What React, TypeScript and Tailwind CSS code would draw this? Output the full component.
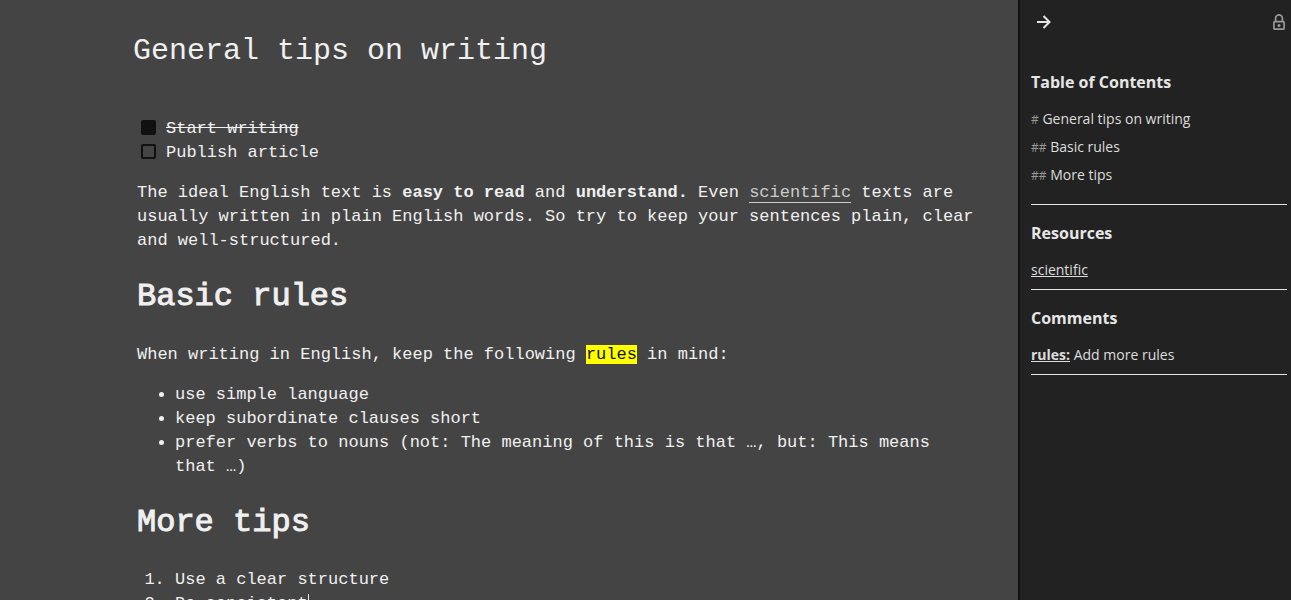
import type { ReactNode } from "react";

const tasks = [
  { id: "task-start", label: "Start writing", done: true },
  { id: "task-publish", label: "Publish article", done: false },
];

const toc = [
  { marker: "#", title: "General tips on writing", href: "#general" },
  { marker: "##", title: "Basic rules", href: "#basic-rules" },
  { marker: "##", title: "More tips", href: "#more-tips" },
];

function ArrowIcon() {
  return (
    <svg width="14" height="14" viewBox="0 0 14 14" fill="none" stroke="currentColor" strokeWidth="2" aria-hidden="true">
      <path d="M0 7h12.5M6.5 1l6 6-6 6" />
    </svg>
  );
}

function LockIcon() {
  return (
    <svg width="12" height="16" viewBox="0 0 12 16" fill="none" stroke="currentColor" strokeWidth="1.7" aria-hidden="true">
      <rect x="0.9" y="7.7" width="10.2" height="7.4" rx="0.8" />
      <path d="M2.6 7.7V4.2a3.4 3.4 0 0 1 6.8 0v3.5" />
      <circle cx="6" cy="11.4" r="1.5" fill="currentColor" stroke="none" />
    </svg>
  );
}

function Heading({ id, children }: { id: string; children: ReactNode }) {
  return (
    <h2 id={id} className="text-[32px] leading-[44px] font-normal [-webkit-text-stroke:1px_#f0f0f0]">
      {children}
    </h2>
  );
}

function PanelSection({ title, children }: { title: string; children: ReactNode }) {
  return (
    <section className="border-b border-[#e6e6e6] pt-4">
      <h3 className="text-[16px] leading-6 font-bold text-[#e6e6e6]">{title}</h3>
      {children}
    </section>
  );
}

export default function App() {
  return (
    <div className="flex h-screen overflow-hidden bg-[#444444]">
      <main className="min-w-0 flex-1 overflow-hidden pt-[29px] pr-10 pl-[133px] font-['Liberation_Mono',monospace] text-[17px] text-[#f0f0f0]">
        <h1 id="general" className="text-[30px] leading-[44px]">
          General tips on writing
        </h1>
        <article className="pt-11 pl-1">
          <ul className="leading-6">
            {tasks.map((task) => (
              <li key={task.id} className="flex items-start gap-2.5 pl-1">
                <input
                  id={task.id}
                  type="checkbox"
                  defaultChecked={task.done}
                  className="mt-[3px] size-[15px] appearance-none rounded-[2px] border-2 border-[#111111] checked:bg-[#111111]"
                />
                <label htmlFor={task.id} className={task.done ? "line-through" : ""}>
                  {task.label}
                </label>
              </li>
            ))}
          </ul>
          <p className="mt-4 leading-6">
            The ideal English text is <strong>easy to read</strong> and <strong>understand.</strong> Even{" "}
            <a href="#scientific" className="border-b border-[#cccccc] text-[#cccccc]">
              scientific
            </a>{" "}
            texts are usually written in plain English words. So try to keep your sentences plain, clear and
            well-structured.
          </p>
          <div className="mt-[22px]">
            <Heading id="basic-rules">Basic rules</Heading>
          </div>
          <p className="mt-6 leading-6">
            When writing in English, keep the following{" "}
            <mark className="bg-[#ffff00] text-[#111111]">rules</mark> in mind:
          </p>
          <ul className="mt-4 list-disc pl-[38px] leading-6">
            <li>use simple language</li>
            <li>keep subordinate clauses short</li>
            <li>prefer verbs to nouns (not: The meaning of this is that …, but: This means that …)</li>
          </ul>
          <div className="mt-[22px]">
            <Heading id="more-tips">More tips</Heading>
          </div>
          <ol className="mt-[23px] list-decimal pl-[38px] leading-6">
            <li>Use a clear structure</li>
            <li>
              <span className="border-r border-[#f0f0f0]">Be consistent</span>
            </li>
          </ol>
        </article>
      </main>

      <aside className="w-[273px] shrink-0 border-l-2 border-[#111111] bg-[#222222] pr-1 pl-[11px] font-['Open_Sans',sans-serif] text-[14px] text-[#dddddd]">
        <header className="flex h-[54px] justify-between pt-[14px] pr-0.5 pl-1.5">
          <button type="button" aria-label="Hide panel" className="h-4 text-[#e6e6e6]">
            <ArrowIcon />
          </button>
          <button type="button" aria-label="Lock" className="h-4 text-[#999999]">
            <LockIcon />
          </button>
        </header>
        <PanelSection title="Table of Contents">
          <ul className="pt-[11px] pb-[15px]">
            {toc.map((entry) => (
              <li key={entry.title} className="leading-7">
                <a href={entry.href}>
                  <span className="text-[12px] leading-none text-[#999999]">{entry.marker}</span> {entry.title}
                </a>
              </li>
            ))}
          </ul>
        </PanelSection>
        <PanelSection title="Resources">
          <p className="pt-[11px] pb-[5px] leading-7">
            <a href="#scientific" className="underline">
              scientific
            </a>
          </p>
        </PanelSection>
        <PanelSection title="Comments">
          <p className="pt-[11px] pb-[5px] leading-7">
            <a href="#basic-rules" className="font-bold underline">
              rules:
            </a>{" "}
            Add more rules
          </p>
        </PanelSection>
      </aside>
    </div>
  );
}
